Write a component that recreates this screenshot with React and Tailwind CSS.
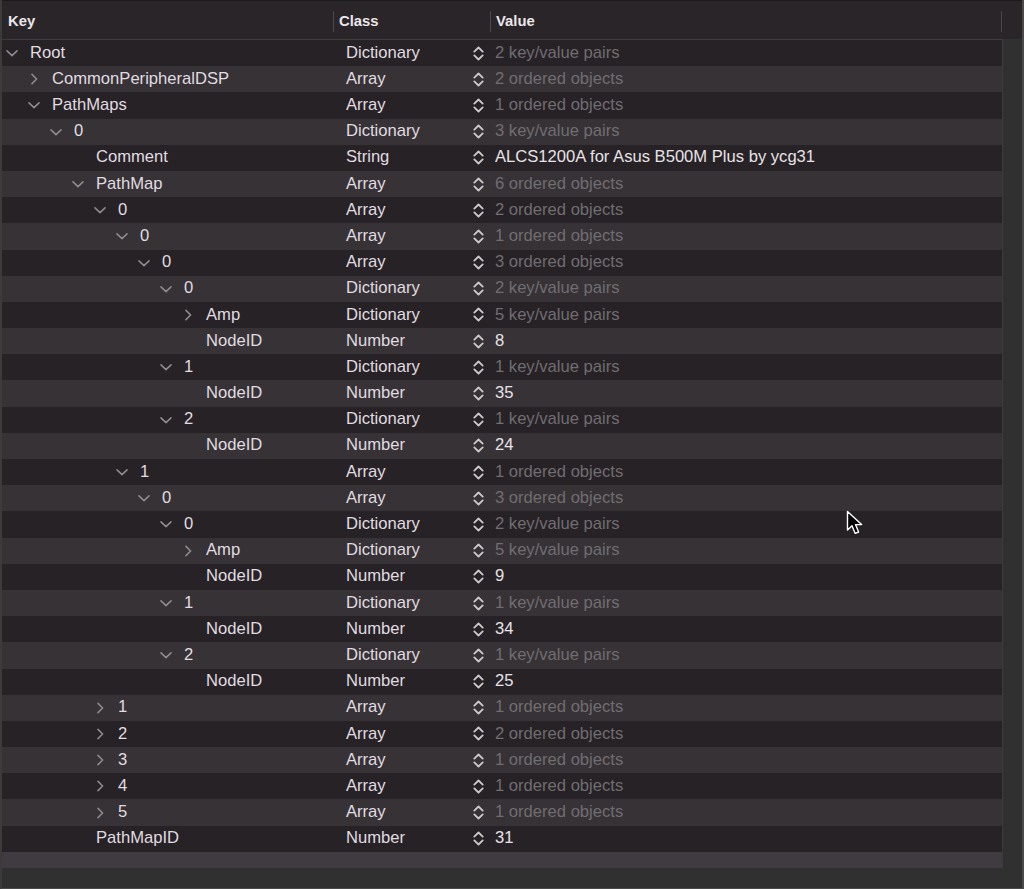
import React from "react";

const rows = [
  { k: "Root", L: 0, c: "d", cls: "Dictionary", v: "2 key/value pairs" },
  { k: "CommonPeripheralDSP", L: 1, c: "r", cls: "Array", v: "2 ordered objects" },
  { k: "PathMaps", L: 1, c: "d", cls: "Array", v: "1 ordered objects" },
  { k: "0", L: 2, c: "d", cls: "Dictionary", v: "3 key/value pairs" },
  { k: "Comment", L: 3, cls: "String", v: "ALCS1200A for Asus B500M Plus by ycg31", real: true },
  { k: "PathMap", L: 3, c: "d", cls: "Array", v: "6 ordered objects" },
  { k: "0", L: 4, c: "d", cls: "Array", v: "2 ordered objects" },
  { k: "0", L: 5, c: "d", cls: "Array", v: "1 ordered objects" },
  { k: "0", L: 6, c: "d", cls: "Array", v: "3 ordered objects" },
  { k: "0", L: 7, c: "d", cls: "Dictionary", v: "2 key/value pairs" },
  { k: "Amp", L: 8, c: "r", cls: "Dictionary", v: "5 key/value pairs" },
  { k: "NodeID", L: 8, cls: "Number", v: "8", real: true },
  { k: "1", L: 7, c: "d", cls: "Dictionary", v: "1 key/value pairs" },
  { k: "NodeID", L: 8, cls: "Number", v: "35", real: true },
  { k: "2", L: 7, c: "d", cls: "Dictionary", v: "1 key/value pairs" },
  { k: "NodeID", L: 8, cls: "Number", v: "24", real: true },
  { k: "1", L: 5, c: "d", cls: "Array", v: "1 ordered objects" },
  { k: "0", L: 6, c: "d", cls: "Array", v: "3 ordered objects" },
  { k: "0", L: 7, c: "d", cls: "Dictionary", v: "2 key/value pairs" },
  { k: "Amp", L: 8, c: "r", cls: "Dictionary", v: "5 key/value pairs" },
  { k: "NodeID", L: 8, cls: "Number", v: "9", real: true },
  { k: "1", L: 7, c: "d", cls: "Dictionary", v: "1 key/value pairs" },
  { k: "NodeID", L: 8, cls: "Number", v: "34", real: true },
  { k: "2", L: 7, c: "d", cls: "Dictionary", v: "1 key/value pairs" },
  { k: "NodeID", L: 8, cls: "Number", v: "25", real: true },
  { k: "1", L: 4, c: "r", cls: "Array", v: "1 ordered objects" },
  { k: "2", L: 4, c: "r", cls: "Array", v: "2 ordered objects" },
  { k: "3", L: 4, c: "r", cls: "Array", v: "1 ordered objects" },
  { k: "4", L: 4, c: "r", cls: "Array", v: "1 ordered objects" },
  { k: "5", L: 4, c: "r", cls: "Array", v: "1 ordered objects" },
  { k: "PathMapID", L: 3, cls: "Number", v: "31", real: true },
];

function Disclosure({ dir }) {
  return (
    <svg width="12" height="12" viewBox="0 0 12 12" className="shrink-0">
      {dir === "d" ? (
        <path d="M1 3.8 L6 8.6 L11 3.8" fill="none" stroke="#8d898d" strokeWidth="1.6" strokeLinecap="round" strokeLinejoin="round" />
      ) : dir === "r" ? (
        <path d="M4 1.4 L8.6 6 L4 10.6" fill="none" stroke="#8d898d" strokeWidth="1.6" strokeLinecap="round" strokeLinejoin="round" />
      ) : null}
    </svg>
  );
}

function Stepper() {
  return (
    <svg width="11" height="15" viewBox="0 0 11 15" className="shrink-0">
      <path d="M1.3 5.6 L5.5 1.5 L9.7 5.6" fill="none" stroke="#cdc9cd" strokeWidth="1.8" strokeLinecap="round" strokeLinejoin="round" />
      <path d="M1.3 9.4 L5.5 13.5 L9.7 9.4" fill="none" stroke="#cdc9cd" strokeWidth="1.8" strokeLinecap="round" strokeLinejoin="round" />
    </svg>
  );
}

function Row({ r, i }) {
  const bg = i % 2 === 1 ? "bg-[#363236]" : "bg-[#262226]";
  return (
    <div className={`flex h-[26.2px] items-center ${bg}`}>
      <div className="flex w-[331px] shrink-0 items-center" style={{ paddingLeft: 22 * r.L }}>
        <div className="flex w-[28px] shrink-0 items-center pl-[4px]">
          <Disclosure dir={r.c} />
        </div>
        <span className="whitespace-nowrap text-[#e0dce0]">{r.k}</span>
      </div>
      <div className="w-[140px] shrink-0 pl-[13px] text-[#e0dce0]">{r.cls}</div>
      <Stepper />
      <div className={`ml-[11px] whitespace-nowrap ${r.real ? "text-[#e6e2e6]" : "text-[#716d71]"}`}>{r.v}</div>
    </div>
  );
}

function Cursor() {
  return (
    <svg className="absolute left-[844px] top-[510px]" width="18" height="27" viewBox="0 0 18 27">
      <path
        d="M1.5 1.5 L1.5 20 L6 15.8 L9.2 23.4 L12.6 22 L9.5 14.6 L15.6 14.6 Z"
        fill="#000"
        stroke="#fff"
        strokeWidth="1.4"
        strokeLinejoin="round"
      />
    </svg>
  );
}

export default function App() {
  return (
    <div
      className="relative flex h-[889px] w-[1024px] flex-col overflow-hidden border-b border-l-2 border-r-2 border-b-[#4a4a4a] border-l-[#3b3b3b] border-r-[#4a4a4a] bg-[#2f302f] text-[16.6px]"
      style={{ fontFamily: '"Liberation Sans", Arial, sans-serif' }}
    >
      <div className="h-px shrink-0 bg-[#1b191b]" />
      <div className="flex h-[38px] shrink-0 items-center bg-[#2a2529] pt-[2px] text-[14.8px] font-bold text-[#ebe7eb]">
        <div className="w-[331px] shrink-0 pl-[6px]">Key</div>
        <div className="h-[21px] w-px shrink-0 bg-[#4a464a]" />
        <div className="w-[156px] shrink-0 pl-[5px]">Class</div>
        <div className="h-[21px] w-px shrink-0 bg-[#4a464a]" />
        <div className="w-[510px] shrink-0 pl-[5px]">Value</div>
        <div className="h-[21px] w-px shrink-0 bg-[#4a464a]" />
      </div>
      <div className="flex shrink-0">
        <div className="w-[1000px] shrink-0">
          <div className="h-px bg-[#3e3a3e]" />
          {rows.map((r, i) => (
            <Row key={i} r={r} i={i} />
          ))}
          <div className="h-[16px] bg-[#403b40]" />
        </div>
        <div className="w-[20px] shrink-0 border-l border-[#3e3a3e]" />
      </div>
      <Cursor />
    </div>
  );
}
